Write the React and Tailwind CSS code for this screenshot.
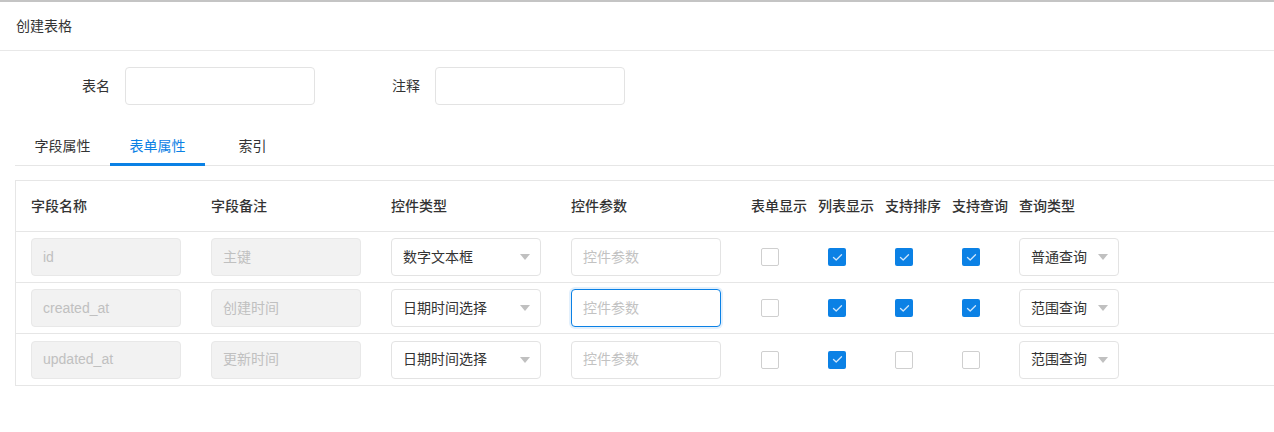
import React from "react";

const rows = [
  { name: "id", note: "主键", type: "数字文本框", form: false, list: true, sort: true, query: true, qtype: "普通查询" },
  { name: "created_at", note: "创建时间", type: "日期时间选择", form: false, list: true, sort: true, query: true, qtype: "范围查询", focus: true },
  { name: "updated_at", note: "更新时间", type: "日期时间选择", form: false, list: true, sort: false, query: false, qtype: "范围查询" },
];

const cols = "grid grid-cols-[180px_180px_180px_180px_67px_67px_67px_67px_1fr]";

function Caret() {
  return <span className="w-0 h-0 border-l-[5px] border-r-[5px] border-t-[6px] border-l-transparent border-r-transparent border-t-[#c0c0c0]" />;
}

function Check({ on }) {
  return on ? (
    <span className="ml-[10px] w-[18px] h-[18px] rounded-[2px] bg-[#0b81e5] flex items-center justify-center">
      <svg width="11" height="9" viewBox="0 0 11 9" fill="none">
        <path d="M1.5 4.5L4.2 7L9.5 1.8" stroke="#cfe6fb" strokeWidth="1.3" strokeLinecap="round" strokeLinejoin="round" />
      </svg>
    </span>
  ) : (
    <span className="ml-[10px] w-[18px] h-[18px] rounded-[2px] border border-[#cfcfcf] bg-white" />
  );
}

function Select({ value, w }) {
  return (
    <div className={`${w} h-[38px] rounded-[4px] border border-[#e3e3e3] bg-white flex items-center justify-between pl-[11px] pr-[10px] text-[#333]`}>
      <span>{value}</span>
      <Caret />
    </div>
  );
}

export default function App() {
  return (
    <div className="w-[1274px] h-[432px] bg-white border-t-2 border-[#c4c4c4] text-[14px] text-[#333] font-['Liberation_Sans','Noto_Sans_CJK_SC',sans-serif]">
      <div className="h-[49px] flex items-center px-[16px] border-b border-[#e8e8e8]">创建表格</div>

      <div className="flex items-center pt-[16px]">
        <span className="w-[110px] text-right">表名</span>
        <div className="ml-[15px] w-[190px] h-[38px] rounded-[4px] border border-[#e3e3e3]" />
        <span className="w-[105px] text-right">注释</span>
        <div className="ml-[15px] w-[190px] h-[38px] rounded-[4px] border border-[#e3e3e3]" />
      </div>

      <div className="ml-[15px] mt-[19px] flex border-b border-[#e6e6e6] h-[42px]">
        <div className="w-[95px] flex items-center justify-center pt-[4px]">字段属性</div>
        <div className="w-[95px] flex items-center justify-center text-[#0b81e5] border-b-[3px] border-[#0b81e5] -mb-[1px] pt-[6px]">表单属性</div>
        <div className="w-[95px] flex items-center justify-center pt-[4px]">索引</div>
      </div>

      <div className="ml-[15px] mt-[14px] border-l border-t border-b border-[#e6e6e6]">
        <div className={`${cols} h-[51px] items-center font-medium text-[#333] border-b border-[#e6e6e6]`}>
          <div className="pl-[15px]">字段名称</div>
          <div className="pl-[15px]">字段备注</div>
          <div className="pl-[15px]">控件类型</div>
          <div className="pl-[15px]">控件参数</div>
          <div className="pl-[15px] whitespace-nowrap">表单显示</div>
          <div className="pl-[15px] whitespace-nowrap">列表显示</div>
          <div className="pl-[15px] whitespace-nowrap">支持排序</div>
          <div className="pl-[15px] whitespace-nowrap">支持查询</div>
          <div className="pl-[15px]">查询类型</div>
        </div>
        {rows.map((r, i) => (
          <div key={r.name} className={`${cols} h-[51px] items-center ${i < rows.length - 1 ? "border-b border-[#e6e6e6]" : ""}`}>
            <div className="pl-[15px]">
              <div className="w-[150px] h-[38px] rounded-[4px] border border-[#e8e8e8] bg-[#f2f2f2] flex items-center px-[11px] text-[#c0c0c0]">{r.name}</div>
            </div>
            <div className="pl-[15px]">
              <div className="w-[150px] h-[38px] rounded-[4px] border border-[#e8e8e8] bg-[#f2f2f2] flex items-center px-[11px] text-[#c0c0c0]">{r.note}</div>
            </div>
            <div className="pl-[15px]">
              <Select value={r.type} w="w-[150px]" />
            </div>
            <div className="pl-[15px]">
              <div className={`w-[150px] h-[38px] rounded-[4px] flex items-center px-[11px] text-[#c2c2c2] bg-white ${r.focus ? "border border-[#0b81e5] shadow-[0_0_0_2px_#e3f0fc]" : "border border-[#e3e3e3]"}`}>控件参数</div>
            </div>
            <div className="pl-[15px] flex"><Check on={r.form} /></div>
            <div className="pl-[15px] flex"><Check on={r.list} /></div>
            <div className="pl-[15px] flex"><Check on={r.sort} /></div>
            <div className="pl-[15px] flex"><Check on={r.query} /></div>
            <div className="pl-[15px]">
              <Select value={r.qtype} w="w-[100px]" />
            </div>
          </div>
        ))}
      </div>
    </div>
  );
}
